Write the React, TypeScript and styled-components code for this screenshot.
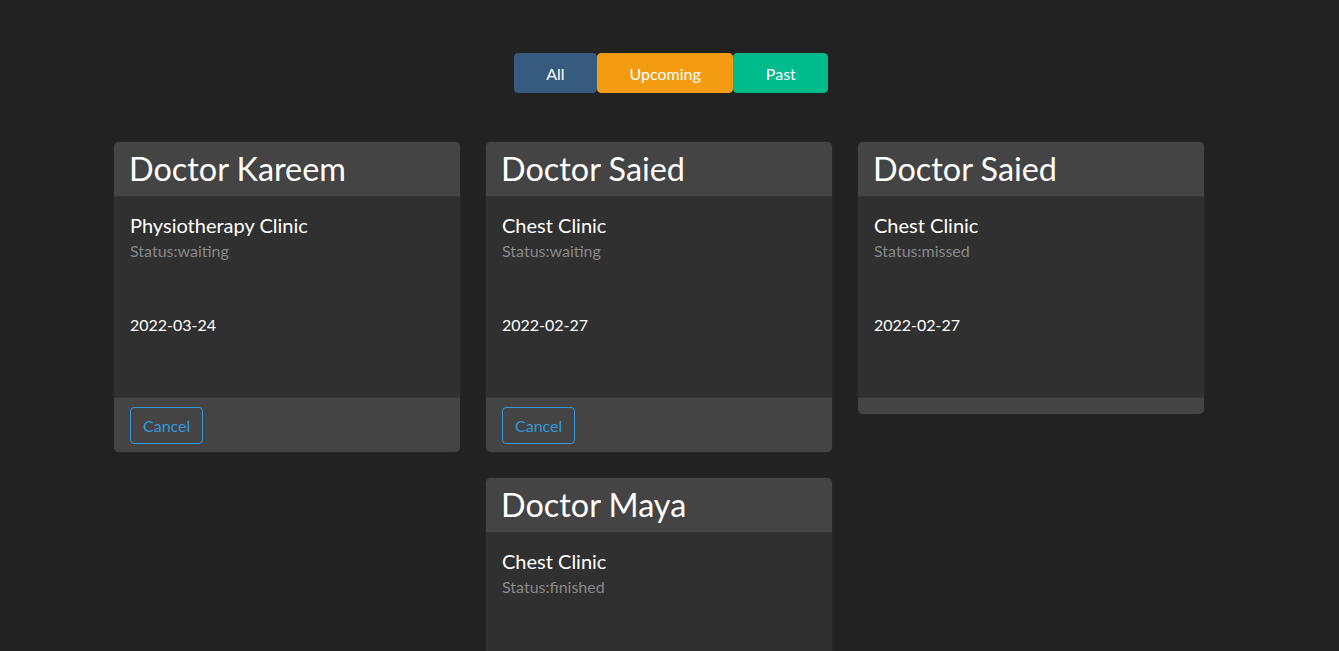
import React from "react";
import styled, { createGlobalStyle } from "styled-components";

const GlobalStyle = createGlobalStyle`
  * { box-sizing: border-box; }
  body {
    margin: 0;
    background: #222222;
    color: #ffffff;
    font-family: Lato, "Liberation Sans", sans-serif;
    font-size: 16px;
    line-height: 1.5;
  }
`;

const Page = styled.div`
  padding-top: 53px;
`;

const FilterBar = styled.div`
  display: flex;
  justify-content: center;
  padding-left: 3px;
`;

const FilterButton = styled.button<{ $bg: string }>`
  height: 40px;
  padding: 0 31.5px;
  border: 1px solid ${(p) => p.$bg};
  border-radius: 4px;
  background: ${(p) => p.$bg};
  color: #ffffff;
  font-family: inherit;
  font-size: 16px;
  cursor: pointer;
`;

const Grid = styled.div`
  display: grid;
  grid-template-columns: repeat(3, 348px);
  column-gap: 24px;
  row-gap: 24px;
  align-items: start;
  padding: 48px 0 0 113px;
`;

const Card = styled.div`
  background: #303030;
  border: 1px solid rgba(0, 0, 0, 0.175);
  border-radius: 6px;
  overflow: hidden;
`;

const CardHeader = styled.div`
  height: 55px;
  background: #444444;
  padding: 8px 15px;
  border-bottom: 1px solid rgba(0, 0, 0, 0.175);
`;

const DoctorName = styled.h1`
  margin: 0;
  font-size: 32.4px;
  font-weight: 400;
  line-height: 38px;
`;

const CardBody = styled.div`
  height: 200px;
  padding: 16px 16px;
`;

const Clinic = styled.h5`
  margin: 0 0 2px;
  font-size: 20px;
  font-weight: 400;
  line-height: 24px;
`;

const Status = styled.div`
  color: #888888;
  font-size: 16px;
  line-height: 24px;
`;

const DateText = styled.p`
  margin: 50px 0 0;
  font-size: 16px;
  line-height: 24px;
`;

const CardFooter = styled.div`
  background: #444444;
  padding: 8px 16px;
  border-top: 1px solid rgba(0, 0, 0, 0.175);
`;

const CancelButton = styled.button`
  display: block;
  height: 37px;
  margin-top: 1px;
  padding: 0 12px;
  background: transparent;
  border: 1px solid #3498db;
  border-radius: 4px;
  color: #3498db;
  font-family: inherit;
  font-size: 16px;
  cursor: pointer;
`;

type Appointment = {
  doctor: string;
  clinic: string;
  status: string;
  date?: string;
  cancellable: boolean;
};

const appointments: Appointment[] = [
  { doctor: "Doctor Kareem", clinic: "Physiotherapy Clinic", status: "waiting", date: "2022-03-24", cancellable: true },
  { doctor: "Doctor Saied", clinic: "Chest Clinic", status: "waiting", date: "2022-02-27", cancellable: true },
  { doctor: "Doctor Saied", clinic: "Chest Clinic", status: "missed", date: "2022-02-27", cancellable: false },
  { doctor: "Doctor Maya", clinic: "Chest Clinic", status: "finished", cancellable: false },
];

const App = () => {
  return (
    <Page>
      <GlobalStyle />
      <FilterBar>
        <FilterButton $bg="#375a7f">All</FilterButton>
        <FilterButton $bg="#f39c12">Upcoming</FilterButton>
        <FilterButton $bg="#00bc8c">Past</FilterButton>
      </FilterBar>
      <Grid>
        {appointments.map((a, i) => (
          <Card key={i} style={i === 3 ? { gridColumn: 2 } : undefined}>
            <CardHeader>
              <DoctorName>{a.doctor}</DoctorName>
            </CardHeader>
            <CardBody>
              <Clinic>{a.clinic}</Clinic>
              <Status>Status:{a.status}</Status>
              {a.date && <DateText>{a.date}</DateText>}
            </CardBody>
            <CardFooter>
              {a.cancellable && <CancelButton>Cancel</CancelButton>}
            </CardFooter>
          </Card>
        ))}
      </Grid>
    </Page>
  );
};

export default App;
